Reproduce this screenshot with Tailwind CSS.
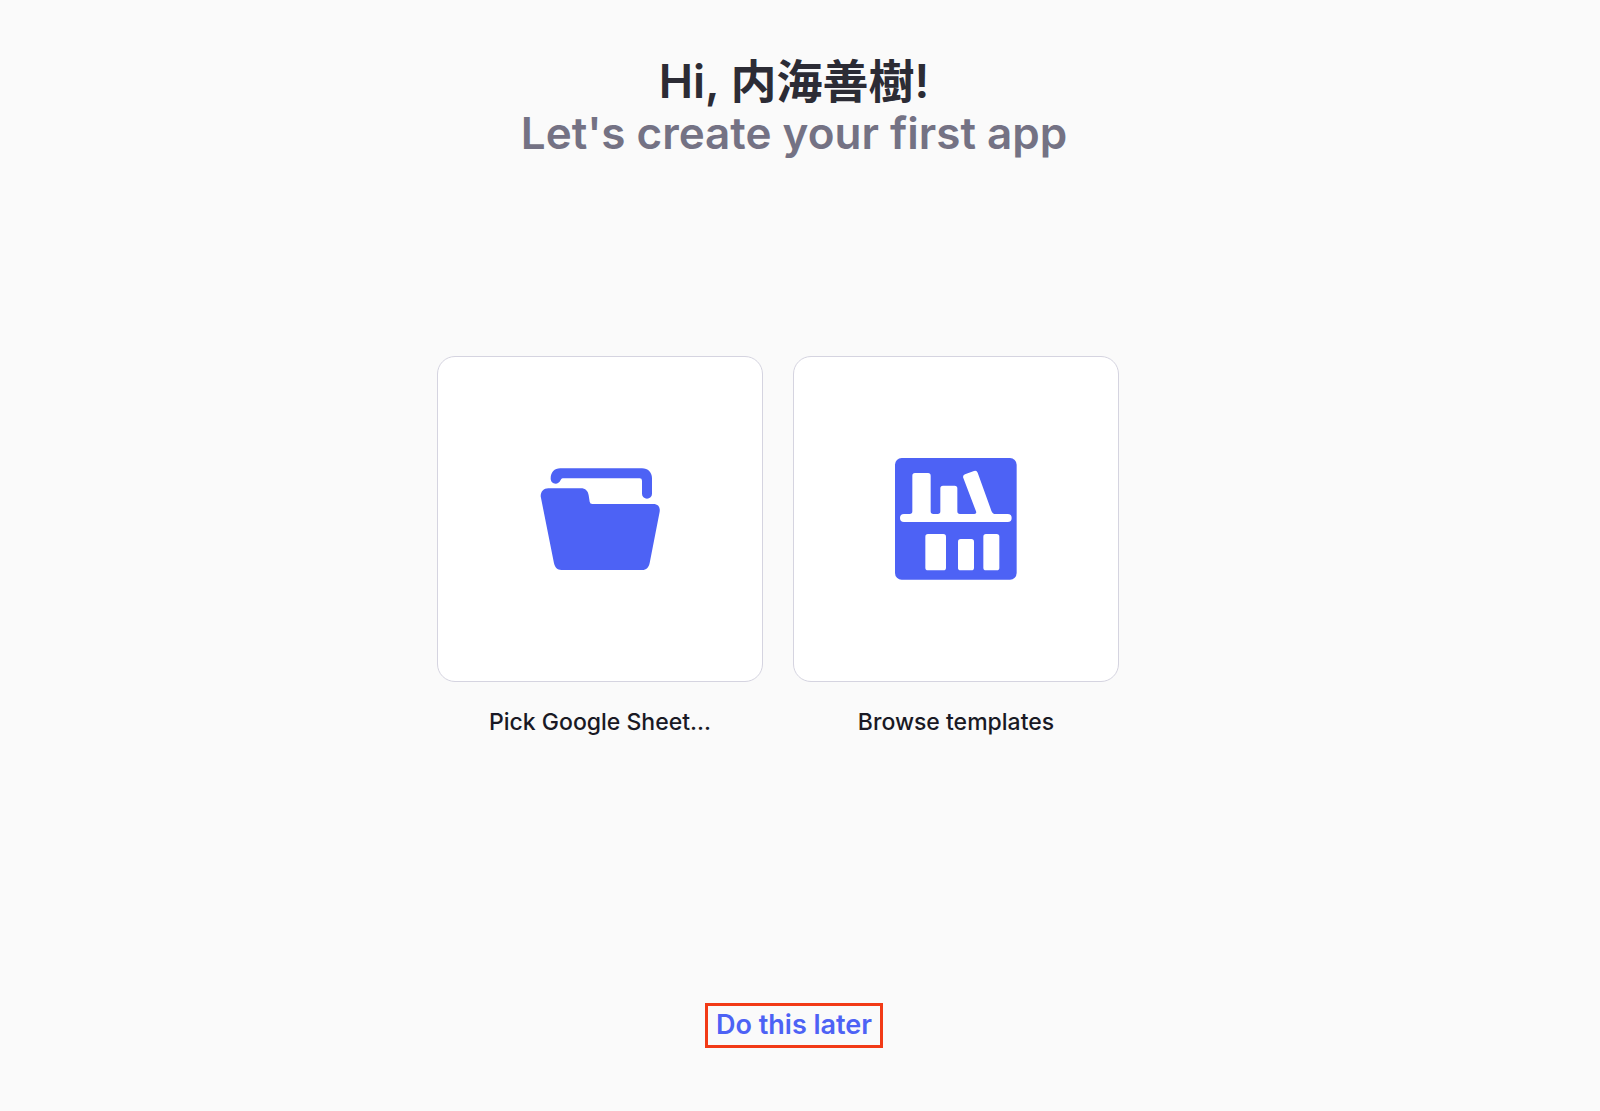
<!DOCTYPE html>
<html lang="en">
<head>
  <meta charset="UTF-8">
  <meta name="viewport" content="width=device-width, initial-scale=1.0">
  <title>Create your first app</title>
  <script src="https://cdn.jsdelivr.net/npm/@tailwindcss/browser@4"></script>
</head>
<body class="min-h-screen bg-[#fafafa] font-['Inter','Noto_Sans_CJK_JP',sans-serif] antialiased flex flex-col items-center pr-3">
  <header class="pt-[55px] text-center">
    <h1 class="leading-[52px] font-semibold">
      <span class="block text-[46px] text-[#2c2c35]">Hi, 内海善樹!</span>
      <span class="block text-[44px] text-[#747284]">Let's create your first app</span>
    </h1>
  </header>

  <main class="flex-1 flex items-center">
    <div class="flex gap-[30px] pr-8">
      <!-- Google Sheet picker -->
      <button type="button" class="flex flex-col items-center gap-6 cursor-pointer">
        <span class="w-[326px] aspect-square flex items-center justify-center bg-white border border-[#d5d4e0] rounded-[18px]">
          <svg class="size-[126px] fill-[#4d62f5]" viewBox="22 3 378 378" aria-hidden="true">
            <path d="M63 70C63 52 74 40 92 40H337C355 40 367 52 367 70V116A15 15 0 0 1 337 116V77Q337 70 330 70H99Q95 70 93 75C89 83 84 86 78 86C69 86 63 80 63 70Z"/>
            <path d="M33 124C33 109 42 100 56 100H153C168 100 175 108 177 121L180 140Q181 147 188 147H371C385 147 392 156 390 170L360 324C357 338 350 345 338 345H95C83 345 76 338 73 325Z"/>
          </svg>
        </span>
        <span class="text-[23px] leading-8 font-medium text-[#191924]">Pick Google Sheet...</span>
      </button>

      <!-- Template gallery -->
      <button type="button" class="flex flex-col items-center gap-6 cursor-pointer">
        <span class="w-[326px] aspect-square flex items-center justify-center bg-white border border-[#d5d4e0] rounded-[18px]">
          <svg class="size-[126px]" viewBox="26 18 378 378" aria-hidden="true">
            <rect x="32" y="24" width="365" height="365" rx="20" fill="#4d62f5"/>
            <g fill="#fff">
              <path d="M59 192H76Q84 192 84 184V77Q84 69 92 69H131Q139 69 139 77V184Q139 192 147 192H160Q168 192 168 184V115Q168 107 176 107H211Q219 107 219 115V184Q219 192 227 192H270Q278 192 275 184L237 84Q234 76 242 73L269 63Q277 60 280 68L321 182Q325 192 333 192H370A12 12 0 0 1 370 216H59A12 12 0 0 1 59 192Z"/>
              <rect x="123" y="252" width="62" height="109" rx="8"/>
              <rect x="221" y="267" width="48" height="94" rx="8"/>
              <rect x="297" y="252" width="48" height="109" rx="8"/>
            </g>
          </svg>
        </span>
        <span class="text-[23px] leading-8 font-medium text-[#191924]">Browse templates</span>
      </button>
    </div>
  </main>

  <footer class="pt-[68px] pb-[63px]">
    <a href="#" class="block border-[3px] border-[#f23a16] px-2 pt-[3px] pb-1 text-[27px] leading-8 font-semibold text-[#4d62f5]">Do this later</a>
  </footer>
</body>
</html>
